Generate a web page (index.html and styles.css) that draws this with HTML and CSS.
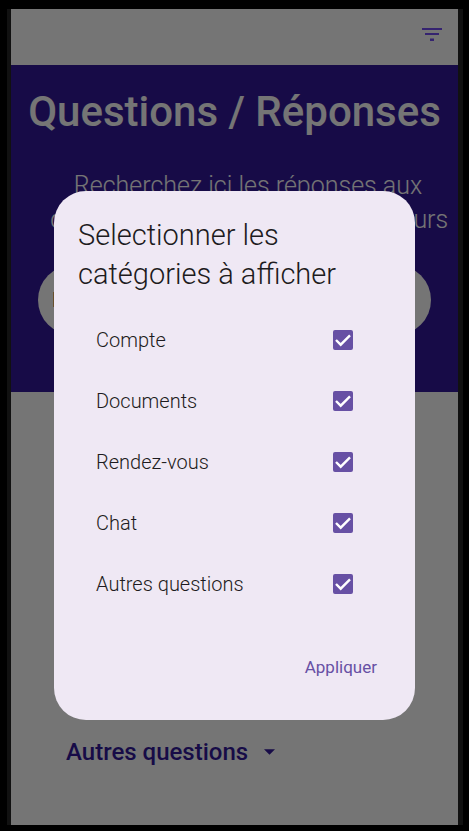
FILE: index.html
```html
<!DOCTYPE html>
<html lang="fr">
<head>
<meta charset="utf-8">
<meta name="viewport" content="width=device-width, initial-scale=1">
<title>Questions / Réponses</title>
<link rel="stylesheet" href="styles.css">
</head>
<body>
<div class="device">
  <div class="screen">
    <header class="topbar">
      <button class="icon-button" type="button" aria-label="Filtrer">
        <svg width="26" height="26" viewBox="0 0 26 26" fill="currentColor" aria-hidden="true"><path d="M3 7h20v2H3zM6 12h14v2H6zM11 17.500h4v2.500h-4z"/></svg>
      </button>
    </header>
    <section class="hero">
      <h1 class="hero-title">Questions / Réponses</h1>
      <p class="hero-text">Recherchez ici les réponses aux<br>questions posées par les utilisateurs</p>
      <input class="search" type="search" aria-label="Rechercher" placeholder="Rechercher">
    </section>
    <main class="content">
      <button class="category" type="button">Autres questions
        <svg width="11" height="6" viewBox="0 0 10 5" fill="currentColor" aria-hidden="true"><path d="M0 0h10L5 5z"/></svg>
      </button>
    </main>
    <div class="overlay">
      <form class="dialog" role="dialog" aria-labelledby="dialog-title">
        <h2 class="dialog-title" id="dialog-title">Selectionner les catégories à afficher</h2>
        <div class="options">
          <label class="option">Compte
            <span class="check"><input type="checkbox" checked><svg viewBox="0 0 20 20" aria-hidden="true"><path d="M3 10l4.700 4.700L17 5.400"/></svg></span>
          </label>
          <label class="option">Documents
            <span class="check"><input type="checkbox" checked><svg viewBox="0 0 20 20" aria-hidden="true"><path d="M3 10l4.700 4.700L17 5.400"/></svg></span>
          </label>
          <label class="option">Rendez-vous
            <span class="check"><input type="checkbox" checked><svg viewBox="0 0 20 20" aria-hidden="true"><path d="M3 10l4.700 4.700L17 5.400"/></svg></span>
          </label>
          <label class="option">Chat
            <span class="check"><input type="checkbox" checked><svg viewBox="0 0 20 20" aria-hidden="true"><path d="M3 10l4.700 4.700L17 5.400"/></svg></span>
          </label>
          <label class="option">Autres questions
            <span class="check"><input type="checkbox" checked><svg viewBox="0 0 20 20" aria-hidden="true"><path d="M3 10l4.700 4.700L17 5.400"/></svg></span>
          </label>
        </div>
        <button class="apply" type="button">Appliquer</button>
      </form>
    </div>
  </div>
</div>
</body>
</html>
```
FILE: styles.css
```css
* {
  box-sizing: border-box;
}

body {
  margin: 0;
  background: #000;
  font-family: Roboto, "Liberation Sans", sans-serif;
}

button {
  border: 0;
  background: none;
  font-family: inherit;
  cursor: pointer;
}

.device {
  display: flex;
  min-height: 100vh;
  padding: 9px 6px 6px 7px;
}

.screen {
  position: relative;
  display: flex;
  flex: 1;
  flex-direction: column;
  min-width: 0;
  border: solid #111;
  border-width: 0 5px 0 4px;
  background: #fff;
}

.topbar {
  display: flex;
  align-items: center;
  justify-content: flex-end;
  height: 56px;
  padding: 0 13px 6px;
}

.icon-button {
  display: flex;
  padding: 0;
  color: #744cf5;
}

.hero {
  padding: 18px 12px 57px;
  background: #341a9c;
  color: #fff;
  text-align: center;
}

.hero-title {
  margin: 0;
  font-size: 42px;
  font-weight: 500;
  line-height: 58px;
  white-space: nowrap;
}

.hero-text {
  margin: 28px 0 0 27px;
  font-size: 25px;
  font-weight: 300;
  line-height: 34px;
  white-space: nowrap;
}

.search {
  display: block;
  width: calc(100% - 30px);
  height: 70px;
  margin: 28px auto 0;
  padding: 0 14px;
  border: 0;
  border-radius: 35px;
  background: #fff;
  font-family: inherit;
  font-size: 20px;
}

.search::placeholder {
  color: #222;
}

.content {
  display: flex;
  flex: 1;
  flex-direction: column;
  justify-content: flex-end;
  align-items: flex-start;
  padding: 0 55px 56px;
}

.category {
  display: flex;
  align-items: center;
  gap: 16px;
  padding: 0;
  color: #341a9c;
  font-size: 24px;
  font-weight: 500;
  line-height: 34px;
}

.overlay {
  position: absolute;
  inset: 0;
  padding: 182px 43px 0;
  background: rgb(0 0 0 / 54%);
}

.dialog {
  display: flex;
  flex-direction: column;
  padding: 25px 24px 35px;
  border-radius: 32px;
  background: #efe8f4;
  color: #1d1b20;
}

.dialog-title {
  margin: 0;
  font-size: 29px;
  font-weight: 300;
  line-height: 39px;
}

.options {
  padding: 15px 38px 0 18px;
}

.option {
  display: flex;
  align-items: center;
  justify-content: space-between;
  height: 61px;
  font-size: 20px;
  font-weight: 300;
}

.check {
  display: grid;
  width: 20px;
  height: 20px;
}

.check > * {
  grid-area: 1 / 1;
}

.check input {
  width: 20px;
  height: 20px;
  margin: 0;
  border: 2px solid #6750a4;
  border-radius: 2px;
  appearance: none;
}

.check input:checked {
  background: #6750a4;
}

.check svg {
  visibility: hidden;
  fill: none;
  stroke: #fff;
  stroke-width: 2.4;
  pointer-events: none;
}

.check input:checked + svg {
  visibility: visible;
}

.apply {
  align-self: flex-end;
  margin-top: 35px;
  padding: 0 14px;
  color: #6750a4;
  font-size: 17px;
  line-height: 36px;
}
```
